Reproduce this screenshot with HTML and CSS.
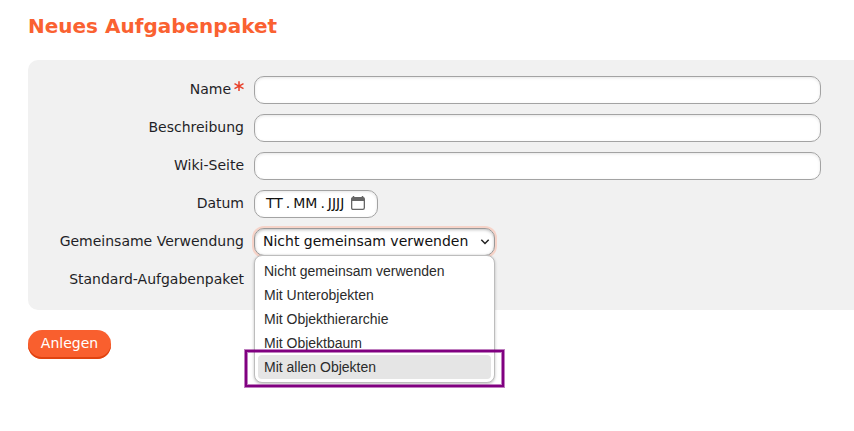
FILE: index.html
```html
<!DOCTYPE html>
<html lang="de">
<head>
<meta charset="utf-8">
<title>Neues Aufgabenpaket</title>
<link rel="stylesheet" href="styles.css">
</head>
<body>
<main class="page">
  <h1 class="title">Neues Aufgabenpaket</h1>
  <form class="form">
    <div class="panel">
      <div class="row">
        <label class="label" for="name">Name<svg class="required" width="10" height="11" viewBox="0 0 10 11"><path d="M5 .3v9.600M.5 2.700l9 4.900M9.500 2.700l-9 4.900" fill="none" stroke="#e8402a" stroke-width="1.500"/></svg></label>
        <input class="field text" id="name" type="text">
      </div>
      <div class="row">
        <label class="label" for="desc">Beschreibung</label>
        <input class="field text" id="desc" type="text">
      </div>
      <div class="row">
        <label class="label" for="wiki">Wiki-Seite</label>
        <input class="field text" id="wiki" type="text">
      </div>
      <div class="row">
        <span class="label">Datum</span>
        <div class="field date">
          <span>TT</span><span class="dot">.</span><span>MM</span><span class="dot">.</span><span>JJJJ</span>
          <svg class="calendar" width="14" height="14" viewBox="0 0 14 14"><path d="M2.500 0v2M11.500 0v2" stroke="#666" stroke-width="1.500"/><path d="M.65 5V3.200Q.65 1.650 2.200 1.650h9.600q1.550 0 1.550 1.550V11.800q0 1.550-1.550 1.550H2.200Q.65 13.350.65 11.800z" fill="#fff" stroke="#666" stroke-width="1.300"/><path d="M.5 5V3q0-1.700 1.700-1.700h9.600q1.700 0 1.700 1.700v2z" fill="#666"/></svg>
        </div>
      </div>
      <div class="row">
        <span class="label">Gemeinsame Verwendung</span>
        <div class="picker">
          <div class="field select">
            <span>Nicht gemeinsam verwenden</span>
            <svg class="chevron" width="10" height="6" viewBox="0 0 10 6"><path d="M1.300.8L5 4.500 8.700.8" fill="none" stroke="#222" stroke-width="1.500"/></svg>
          </div>
          <ul class="menu">
            <li class="option">Nicht gemeinsam verwenden</li>
            <li class="option">Mit Unterobjekten</li>
            <li class="option">Mit Objekthierarchie</li>
            <li class="option">Mit Objektbaum</li>
            <li class="option active">Mit allen Objekten</li>
          </ul>
          <div class="highlight"></div>
        </div>
      </div>
      <div class="row">
        <span class="label">Standard-Aufgabenpaket</span>
      </div>
    </div>
    <button class="submit" type="button">Anlegen</button>
  </form>
</main>
</body>
</html>
```
FILE: styles.css
```css
* { box-sizing: border-box; }

body {
  margin: 0;
  background: #fff;
  color: #1f1f27;
  font: 14px/20px "DejaVu Sans", sans-serif;
}

.page {
  min-height: 431px;
  padding: 12px 0 0 28px;
}

.title {
  margin: 0 0 20px;
  color: #fa6131;
  font-size: 20px;
  line-height: 28px;
  font-weight: bold;
}

.panel {
  height: 250px;
  padding: 11px 0;
  background: #f1f1f1;
  border-radius: 10px 0 0 10px;
}

.row {
  display: flex;
  align-items: center;
  gap: 10px;
  height: 38px;
}

.label {
  display: flex;
  justify-content: flex-end;
  width: 216px;
  padding-bottom: 2px;
  white-space: nowrap;
}

.required { margin: 2px 0 0 3px; }

.field {
  height: 28px;
  border: 1px solid #a3a3a3;
  border-radius: 10px;
  background: #fff;
  box-shadow: inset 0 1px 3px rgba(0, 0, 0, .1);
}

.text { width: 567px; outline: none; }

.date {
  display: flex;
  align-items: center;
  width: 124px;
  padding: 0 0 2px 11px;
  color: #111;
}

.dot { width: 10.4px; padding-left: 3px; }

.calendar { margin: 0 0 0 6.2px; }

.picker {
  position: relative;
  width: 241px;
}

.select {
  display: flex;
  align-items: center;
  justify-content: space-between;
  padding: 0 4px 2px 8px;
  border-color: #999;
  box-shadow: inset 0 1px 3px rgba(0, 0, 0, .25), 0 0 0 2px #f6d3c8;
  color: #111;
  white-space: nowrap;
}

.chevron { margin-top: 2px; }

.menu {
  position: absolute;
  z-index: 1;
  top: 27px;
  left: 0;
  width: 241px;
  height: 128px;
  margin: 0;
  padding: 3px;
  list-style: none;
  background: #fff;
  border: 1px solid #bdbdbd;
  border-radius: 8px;
  box-shadow: 0 1px 3px rgba(0, 0, 0, .25);
  color: #2b2b2b;
  font: 14px/24px "Liberation Sans", sans-serif;
}

.option {
  height: 24px;
  padding-left: 6px;
  border-radius: 4px;
}

.active { background: #e5e5e5; }

.highlight {
  position: absolute;
  z-index: 2;
  top: 122px;
  left: -9px;
  width: 259px;
  height: 37px;
  border: 2px solid #800080;
  box-shadow: 0 0 0 1px rgba(128, 0, 128, .5), inset 0 0 0 1px rgba(128, 0, 128, .5);
}

.submit {
  display: block;
  width: 83px;
  height: 29px;
  margin-top: 20px;
  padding: 0 0 4px;
  border: 0;
  border-radius: 14px;
  background: #f95f2e;
  box-shadow: inset 0 -2px #e04310;
  color: #fff;
  font: 14px/20px "DejaVu Sans", sans-serif;
}
```
